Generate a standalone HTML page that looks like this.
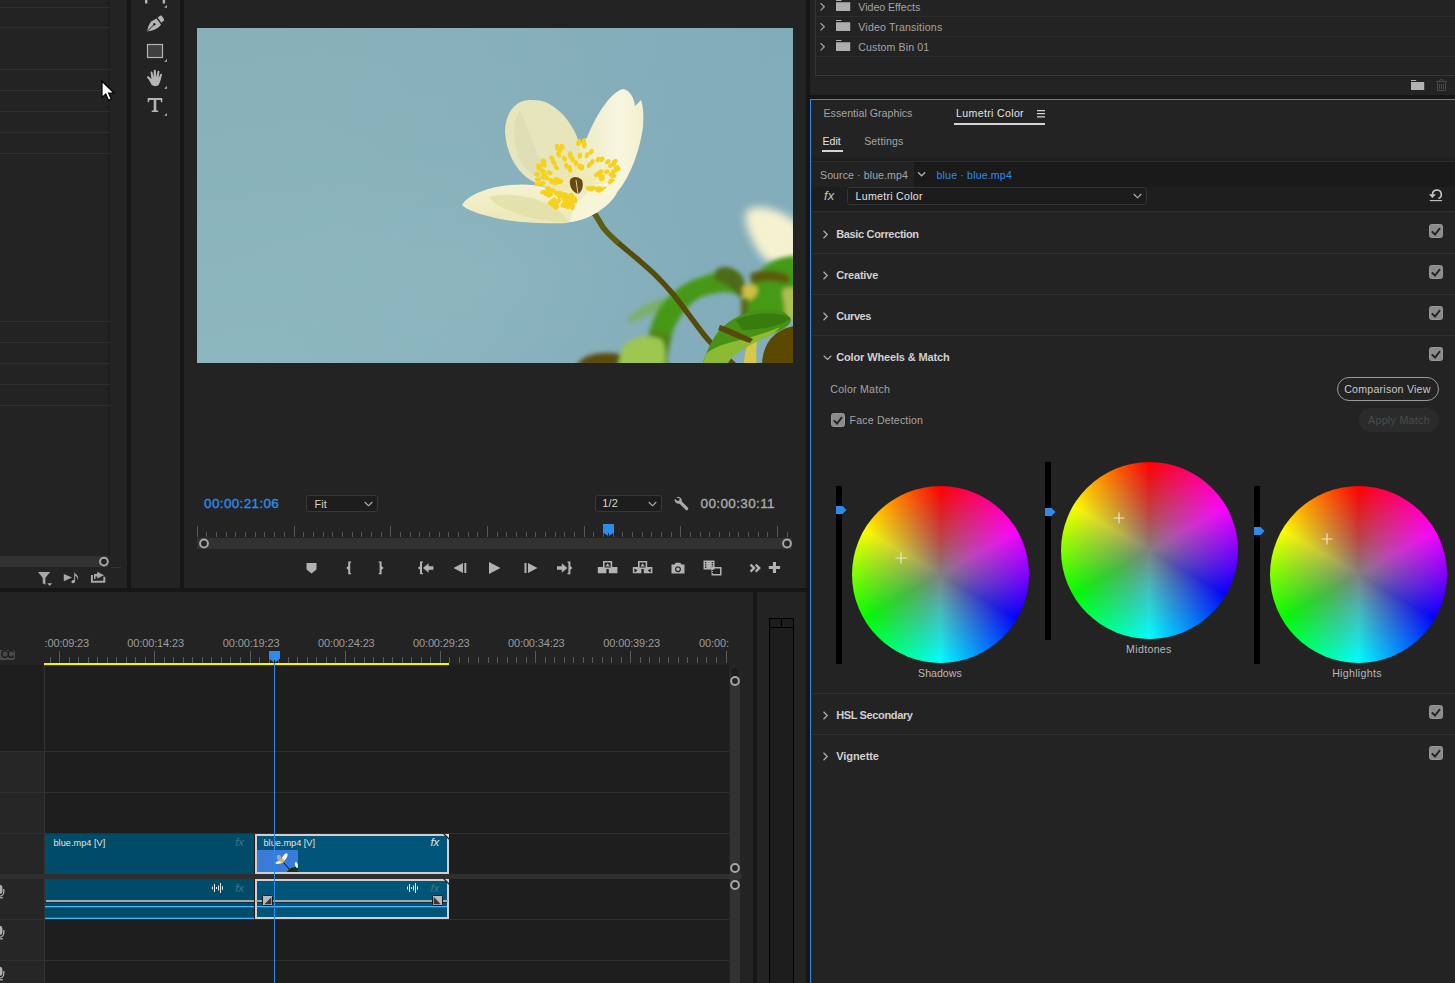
<!DOCTYPE html>
<html><head><meta charset="utf-8"><title>Premiere Pro - Lumetri Color</title>
<style>
html,body{margin:0;padding:0;background:#232323;}
body{width:1455px;height:983px;overflow:hidden;position:relative;font-family:"Liberation Sans",sans-serif;font-size:12px;color:#a7a7a7;}
.a{position:absolute;}
.t{position:absolute;white-space:nowrap;line-height:14px;}
.b{font-weight:bold;color:#d2d2d2;}
.dk{position:absolute;background:#161616;}
.ln{position:absolute;background:#2e2e2e;height:1px;}
svg{position:absolute;overflow:visible;}
.cb{position:absolute;width:14px;height:14px;background:#8b8b8b;border:1px solid #979797;box-sizing:border-box;border-radius:2.5px;}
.cb svg{left:-1px;top:-1px;}
</style></head><body>
<!-- LEFT PROJECT PANEL -->
<div class="a" style="left:0;top:0;width:110px;height:588px;background:#232323"></div>
<div class="a" style="left:108px;top:0;width:2px;height:555px;background:#1e1e1e"></div>
<div class="ln" style="left:0;top:7px;width:110px;background:#2e2e2e"></div>
<div class="ln" style="left:0;top:27px;width:110px;background:#2e2e2e"></div>
<div class="ln" style="left:0;top:69px;width:110px;background:#2e2e2e"></div>
<div class="ln" style="left:0;top:90px;width:110px;background:#2e2e2e"></div>
<div class="ln" style="left:0;top:111px;width:110px;background:#2e2e2e"></div>
<div class="ln" style="left:0;top:132px;width:110px;background:#2e2e2e"></div>
<div class="ln" style="left:0;top:153px;width:110px;background:#2e2e2e"></div>
<div class="ln" style="left:0;top:321px;width:110px;background:#2e2e2e"></div>
<div class="ln" style="left:0;top:342px;width:110px;background:#2e2e2e"></div>
<div class="ln" style="left:0;top:363px;width:110px;background:#2e2e2e"></div>
<div class="ln" style="left:0;top:384px;width:110px;background:#2e2e2e"></div>
<div class="ln" style="left:0;top:405px;width:110px;background:#2e2e2e"></div>

<div class="a" style="left:0;top:556px;width:108px;height:11px;background:#323232"></div>
<svg style="left:98px;top:556px" width="12" height="12"><circle cx="5.900" cy="5.600" r="3.900" fill="#232323" stroke="#a6a6a6" stroke-width="2"/></svg>
<div class="a" style="left:111px;top:567px;width:10px;height:1px;background:#333"></div>
<!-- bottom icons -->
<svg style="left:36px;top:570px" width="70" height="18" viewBox="36 570 70 18">
<g fill="#a8a8a8">
<path d="M38 572 H50.200 L45.400 577.800 V584.800 L42.700 583.200 V577.800 Z"/><path d="M47.200 583.200 h4.900 l-2.450 2.900z"/>
<path d="M63.800 574 L72 577.600 L63.800 581.200 Z"/>
<path d="M74.300 572.300 c.6 1.600 3.400 2.400 3.900 5.400 c.1 .9 -.1 1.700 -.5 2.300 c.1 -2.300 -1.300 -3.500 -2.600 -3.900 v5.400 a1.900 1.500 -20 1 1 -1 -1.300 z"/>
<path d="M97.200 571.800 L104 575.200 L97.200 578.600 V576.600 H95.500 V579 H94 V574 H97.200Z"/>
</g>
<path d="M91.900 575 v6.800 h12.400 v-5" fill="none" stroke="#a8a8a8" stroke-width="2"/>
</svg>
<!-- cursor -->
<svg style="left:101px;top:80px" width="14" height="22" viewBox="0 0 14 22"><path d="M1 1.200 V17.400 L4.800 14 L7.500 20.200 L10.200 19 L7.600 13 H13 Z" fill="#fff" stroke="#000" stroke-width="1.200" stroke-linejoin="miter"/></svg>
<!-- vertical dark bars -->
<div class="dk" style="left:127px;top:0;width:4px;height:588px"></div>
<div class="dk" style="left:180px;top:0;width:4px;height:588px"></div>
<!-- TOOLS -->
<svg style="left:140px;top:0" width="34" height="120" viewBox="0 0 34 120">
<g fill="#b4b4b4">
<path d="M5 0 h2.400 v3.600 h-2.400z M22.700 0 h2.400 v3.600 h-2.400z"/>
<path d="M27 5 v2.800 h-2.800z M27 59 v2.800 h-2.800z M27 86 v2.800 h-2.800z M27 113 v2.800 h-2.800z"/>
<!-- pen -->
<path d="M7.200 31.400 C7.700 27 9.300 23.500 11.600 21.300 L16.500 18.600 L21 24.400 C18.800 27.800 14.200 30.400 7.200 31.400Z"/>
<path d="M17.600 17.400 L20.300 15.700 C20.900 15.400 21.500 15.500 21.900 16 L24 19.300 C24.300 19.800 24.200 20.400 23.700 20.800 L21.400 22.700Z"/>
</g>
<path d="M7.600 31 L13.800 24.800" stroke="#232323" stroke-width="1" fill="none"/><circle cx="14.300" cy="24.300" r="1.200" fill="#232323"/>
<!-- rect -->
<rect x="7.500" y="44.500" width="15" height="13" fill="#404040" stroke="#b4b4b4" stroke-width="1.200"/>
<!-- hand -->
<g fill="#b4b4b4" transform="translate(1.600,-0.900)"><path d="M10.200 86 c-1.300 -2 -2.800 -5.500 -4.600 -7.300 c-.8 -1.200 .5 -2.200 1.700 -1.300 l2.600 2.600 l-.9 -6.300 c-.2 -1.400 1.600 -1.700 1.900 -.3 l1.100 4.800 l.2 -6.600 c0 -1.400 1.900 -1.400 2 0 l.4 6.500 l1.300 -5.600 c.3 -1.300 2.100 -.9 1.900 .4 l-.8 5.900 l1.600 -3.600 c.6 -1.200 2.200 -.5 1.800 .8 c-.9 3 -1.400 6.500 -3.400 10 c-1.500 1.400 -5 1.400 -6.800 0z"/></g>
<!-- T -->
<path d="M7.700 98 h14.600 v4.300 h-1.200 l-.6 -2.300 h-4.200 v10.200 l2 .5 v1.400 h-6.600 v-1.400 l2 -.5 v-10.200 h-4.200 l-.6 2.300 h-1.200z" fill="#b4b4b4"/>
</svg>
<!-- PROGRAM MONITOR IMAGE -->
<svg style="left:197px;top:28px" width="596" height="335" viewBox="197 28 596 335">
<defs>
<linearGradient id="sky" x1="0" y1="0" x2="0.25" y2="1"><stop offset="0" stop-color="#87b0b9"/><stop offset="1" stop-color="#8db7bf"/></linearGradient>
<linearGradient id="sky2" x1="0" y1="0" x2="1" y2="0.15"><stop offset="0.200" stop-color="#81abba" stop-opacity="0.000"/><stop offset="0.267" stop-color="#81abba" stop-opacity="0.017"/><stop offset="0.333" stop-color="#81abba" stop-opacity="0.063"/><stop offset="0.400" stop-color="#81abba" stop-opacity="0.133"/><stop offset="0.467" stop-color="#81abba" stop-opacity="0.220"/><stop offset="0.533" stop-color="#81abba" stop-opacity="0.320"/><stop offset="0.600" stop-color="#81abba" stop-opacity="0.425"/><stop offset="0.667" stop-color="#81abba" stop-opacity="0.530"/><stop offset="0.733" stop-color="#81abba" stop-opacity="0.630"/><stop offset="0.800" stop-color="#81abba" stop-opacity="0.717"/><stop offset="0.867" stop-color="#81abba" stop-opacity="0.787"/><stop offset="0.933" stop-color="#81abba" stop-opacity="0.833"/><stop offset="1.000" stop-color="#81abba" stop-opacity="0.850"/></linearGradient>
<radialGradient id="sky3" cx="0.45" cy="0.75" r="0.4"><stop offset="0" stop-color="#92b9c1" stop-opacity="0.4"/><stop offset="1" stop-color="#8fb9c1" stop-opacity="0"/></radialGradient>
<filter id="b2" x="-20%" y="-20%" width="140%" height="140%"><feGaussianBlur stdDeviation="2.1"/></filter>
<filter id="b3" x="-20%" y="-20%" width="140%" height="140%"><feGaussianBlur stdDeviation="2.600"/></filter>
<filter id="b4" x="-30%" y="-30%" width="160%" height="160%"><feGaussianBlur stdDeviation="4.500"/></filter>
<filter id="b1" x="-10%" y="-10%" width="120%" height="120%"><feGaussianBlur stdDeviation="0.700"/></filter>
<filter id="b05"><feGaussianBlur stdDeviation="0.450"/></filter>
<clipPath id="imgc"><rect x="197" y="28" width="596" height="335"/></clipPath>
<linearGradient id="pLL" x1="0" y1="0" x2="0" y2="1"><stop offset="0" stop-color="#f5f2d2"/><stop offset="1" stop-color="#ece8b8"/></linearGradient>
<linearGradient id="pR" x1="0" y1="0" x2="1" y2="0"><stop offset="0" stop-color="#ecebc8"/><stop offset="0.6" stop-color="#f8f6de"/><stop offset="1" stop-color="#f3f0d0"/></linearGradient>
</defs>
<g clip-path="url(#imgc)">
<rect x="197" y="28" width="596" height="335" fill="url(#sky)"/>
<rect x="197" y="28" width="596" height="335" fill="url(#sky2)"/>
<rect x="197" y="28" width="596" height="335" fill="url(#sky3)"/>
<!-- blurred background flower -->
<g filter="url(#b4)"><path d="M747 210 C760 203 784 210 800 226 L800 268 C786 262 770 268 760 254 C752 240 742 222 747 210Z" fill="#f6f2d0"/></g>
<!-- feathery leaf far left (soft) -->
<g filter="url(#b3)" opacity=".8"><path d="M627 320 C640 306 654 300 668 298 L664 310 C652 312 640 318 630 324Z" fill="#7ab04a"/></g>
<!-- big arc leaf-stalk -->
<g filter="url(#b2)">
<path d="M644 366 C644 350 650 322 660 307 C672 290 690 280 702 277 C712 274 720 270 726 267 C734 268 740 274 742 282 C744 290 742 296 736 294 C730 291 714 292 701 297 C690 302 680 316 674 328 C670 340 667 354 667 366Z" fill="#469814"/>
<path d="M716 270 C724 264 736 268 742 276 C746 284 746 292 740 298 C734 288 724 282 714 280Z" fill="#4e6a12"/>
<path d="M576 366 C582 354 600 351 620 354 L624 366Z" fill="#5a4c0a"/>
<path d="M644 366 C644 352 648 338 652 330 L672 336 C669 346 667 356 667 366Z" fill="#527a12" opacity=".7"/>
<path d="M618 366 L622 348 C632 336 650 333 662 340 C666 348 666 358 664 366Z" fill="#9cc850"/>
<!-- right greens -->
<path d="M748 290 C756 268 774 256 796 256 L796 318 C780 316 762 316 750 318 C746 308 746 298 748 290Z" fill="#459a16"/>
<path d="M750 274 C762 268 780 270 790 276 L788 284 C776 280 762 280 752 284Z" fill="#5a5a10"/>
<path d="M742 288 C748 282 756 284 758 290 C756 298 750 302 744 300Z" fill="#cfc040"/>
<path d="M741 298 L748 298 L748 322 L741 322Z" fill="#566a14"/>
<path d="M782 290 C788 286 796 288 796 288 L796 318 L786 318Z" fill="#c8c860" opacity=".8"/>
</g>
<!-- stem -->
<path d="M591.5 211 C592.2 211.8 593.7 212.5 595.9 215.6 C598.1 218.7 601.1 225.1 604.6 229.4 C608.1 233.7 610.9 236.3 616.7 241.5 C622.5 246.7 632.6 254.7 639.2 260.5 C645.8 266.3 650.7 270.3 656.5 276.1 C662.3 281.9 668.0 288.2 673.8 295.1 C679.5 302.0 685.2 310.1 691 317.6 C696.8 325.1 701.7 332.6 708.3 340 C714.9 347.4 726.2 357.2 730.8 361.7 C735.4 366.2 735.1 366.1 736 367" fill="none" stroke="#544c08" stroke-width="5.400" stroke-linecap="round" filter="url(#b1)"/>
<path d="M591.5 211 C592.2 211.8 593.7 212.5 595.9 215.6 C598.1 218.7 601.1 225.1 604.6 229.4 C608.1 233.7 614.7 239.5 616.7 241.5" fill="none" stroke="#5e6412" stroke-width="5.400" stroke-linecap="round" filter="url(#b1)" opacity=".8"/>
<!-- foreground leaf -->
<g filter="url(#b1)">
<path d="M744 366 C744 356 746 346 750 340 L757 342 C756 350 756 358 757 366Z" fill="#d6c84c"/>
<path d="M762 366 C762 346 772 330 794 326 L796 366Z" fill="#5c4a06"/>
<path d="M702 366 C706 352 712 340 718 332 C730 318 748 310 768 309 C778 309 788 312 791 320 C790 326 782 330 772 334 C756 340 742 348 730 358 L724 366Z" fill="#479212"/>
<path d="M702 366 L706 354 C714 347 726 343 740 340 C752 337 766 333 780 327 C776 333 768 337 758 341 C746 347 736 353 730 360 L726 366Z" fill="#8cba30"/>
<path d="M720 325 C730 328 742 334 753 339 L750 343 C740 340 728 334 718 330Z" fill="#5a4a08"/>
<path d="M736 320 C754 312 776 311 791 318 C782 326 760 330 742 330Z" fill="#35780f" opacity=".85"/>
</g>
<!-- petals -->
<g filter="url(#b05)">
<path d="M556 188 C562 170 574 150 586 138 L600 150 L604 196 L590 216 L572 222 L552 204Z" fill="#eeebc6"/>
<path d="M529 100 C515 100 505 114 505 132 C506 152 516 172 532 181 C542 186 552 190 562 190 C576 180 582 160 579 143 C574 125 560 108 545 102 C539 100 534 100 529 100Z" fill="#e6e5bc"/>
<path d="M520 110 C512 122 512 146 522 164 C530 174 540 180 550 182 C540 160 530 134 520 110Z" fill="#dcdcb2" opacity=".7"/>
<path d="M623 89 C612 92 598 110 586 140 L581 162 L598 196 L617 192 C630 178 640 150 643 127 C644 115 643 105 641 100 L635 106 C634 98 630 90 623 89Z" fill="url(#pR)"/>
<path d="M462 205 C468 195 488 187 510 185 C530 183 546 186 560 192 L578 214 C574 220 570 223 566 223 C548 224 520 223 500 219 C482 215 466 210 462 205Z" fill="url(#pLL)"/>
<path d="M489 197 C506 192 530 196 548 204 C558 210 566 216 568 222 C548 222 524 218 508 210 C498 206 492 202 489 197Z" fill="#e2dea4" opacity=".75"/>
<path d="M570 222 C572 210 578 200 588 192 C598 184 610 178 621 174 C622 182 618 194 610 202 C600 212 586 220 570 222Z" fill="#f7f5d8"/>
</g>
<!-- stamens -->
<g stroke="#f1eaa8" stroke-width="0.700" opacity=".85" fill="none">
<path d="M576 185 L554.9 182.9"/>
<path d="M576 185 L579.7 166.3"/>
<path d="M576 185 L564.5 158.8"/>
<path d="M576 185 L569.6 202.9"/>
<path d="M576 185 L572.0 201.5"/>
<path d="M576 185 L571.4 195.7"/>
<path d="M576 185 L543.3 163.2"/>
<path d="M576 185 L565.3 198.1"/>
<path d="M576 185 L579.1 142.2"/>
<path d="M576 185 L570.3 155.9"/>
<path d="M576 185 L588.8 188.3"/>
<path d="M576 185 L601.5 176.6"/>
<path d="M576 185 L565.3 195.5"/>
<path d="M576 185 L537.5 184.1"/>
<path d="M576 185 L553.5 200.3"/>
<path d="M576 185 L579.9 155.7"/>
<path d="M576 185 L569.8 168.1"/>
<path d="M576 185 L571.2 198.1"/>
<path d="M576 185 L587.0 155.1"/>
<path d="M576 185 L542.5 183.3"/>
<path d="M576 185 L556.3 167.3"/>
<path d="M576 185 L607.7 161.8"/>
<path d="M576 185 L546.9 193.6"/>
<path d="M576 185 L557.7 148.9"/>
<path d="M576 185 L592.1 161.9"/>
<path d="M576 185 L590.8 189.1"/>
<path d="M576 185 L543.9 165.0"/>
<path d="M576 185 L558.3 201.2"/>
<path d="M576 185 L571.1 204.6"/>
<path d="M576 185 L601.8 159.4"/>
<path d="M576 185 L601.9 178.8"/>
<path d="M576 185 L591.3 151.8"/>
<path d="M576 185 L570.4 154.2"/>
<path d="M576 185 L616.7 167.5"/>
<path d="M576 185 L552.0 158.3"/>
<path d="M576 185 L568.3 205.5"/>
<path d="M576 185 L583.8 141.4"/>
<path d="M576 185 L600.5 171.8"/>
<path d="M576 185 L542.9 171.1"/>
<path d="M576 185 L573.4 201.4"/>
<path d="M576 185 L563.5 194.7"/>
<path d="M576 185 L568.2 206.3"/>
<path d="M576 185 L564.4 198.4"/>
<path d="M576 185 L539.4 168.5"/>
<path d="M576 185 L567.4 202.3"/>
<path d="M576 185 L562.3 146.6"/>
<path d="M576 185 L613.5 164.1"/>
<path d="M576 185 L548.0 188.4"/>
<path d="M576 185 L537.2 174.4"/>
<path d="M576 185 L593.1 187.8"/>
<path d="M576 185 L560.2 196.2"/>
<path d="M576 185 L549.7 194.3"/>
<path d="M576 185 L572.6 159.5"/>
<path d="M576 185 L575.1 200.1"/>
<path d="M576 185 L544.2 174.6"/>
<path d="M576 185 L605.5 189.1"/>
<path d="M576 185 L558.7 154.7"/>
<path d="M576 185 L582.0 167.6"/>
<path d="M576 185 L611.7 180.8"/>
<path d="M576 185 L613.3 175.9"/>
<path d="M576 185 L549.4 172.8"/>
<path d="M576 185 L563.0 204.7"/>
<path d="M576 185 L559.4 193.2"/>
<path d="M576 185 L559.0 182.0"/>
<path d="M576 185 L565.8 200.9"/>
<path d="M576 185 L572.3 206.4"/>
<path d="M576 185 L576.0 163.1"/>
<path d="M576 185 L551.4 191.2"/>
<path d="M576 185 L556.6 179.1"/>
<path d="M576 185 L617.6 169.2"/>
<path d="M576 185 L553.9 162.4"/>
<path d="M576 185 L570.1 196.0"/>
<path d="M576 185 L551.3 180.3"/>
<path d="M576 185 L596.9 174.6"/>
<path d="M576 185 L572.4 207.1"/>
<path d="M576 185 L566.6 165.7"/>
<path d="M576 185 L570.0 169.8"/>
<path d="M576 185 L557.4 146.8"/>
<path d="M576 185 L611.5 174.3"/>
<path d="M576 185 L550.3 190.3"/>
<path d="M576 185 L552.5 203.4"/>
<path d="M576 185 L559.9 150.0"/>
<path d="M576 185 L552.4 182.0"/>
<path d="M576 185 L614.8 161.4"/>
<path d="M576 185 L614.0 171.3"/>
<path d="M576 185 L611.0 165.3"/>
<path d="M576 185 L549.6 195.2"/>
<path d="M576 185 L560.3 181.0"/>
<path d="M576 185 L573.4 198.8"/>
<path d="M576 185 L543.2 192.1"/>
<path d="M576 185 L600.5 188.9"/>
<path d="M576 185 L612.2 187.2"/>
<path d="M576 185 L598.8 188.4"/>
<path d="M576 185 L556.8 193.1"/>
<path d="M576 185 L559.2 194.6"/>
<path d="M576 185 L578.3 143.1"/>
<path d="M576 185 L606.7 171.8"/>
<path d="M576 185 L584.4 145.5"/>
<path d="M576 185 L565.4 205.2"/>
<path d="M576 185 L611.0 182.6"/>
<path d="M576 185 L598.2 159.4"/>
<path d="M576 185 L550.7 202.6"/>
<path d="M576 185 L538.0 179.6"/>
<path d="M576 185 L598.2 190.2"/>
<path d="M576 185 L539.0 166.0"/>
<path d="M576 185 L589.2 165.0"/>
<path d="M576 185 L566.1 196.7"/>
<path d="M576 185 L611.8 181.7"/>
<path d="M576 185 L555.0 205.4"/>
<path d="M576 185 L602.2 192.3"/>
<path d="M576 185 L543.9 177.6"/>
<path d="M576 185 L603.0 191.2"/>
<path d="M576 185 L557.5 147.7"/>
<path d="M576 185 L543.6 161.1"/>
<path d="M576 185 L598.5 173.5"/>
<path d="M576 185 L552.8 190.9"/>
<path d="M576 185 L547.0 194.1"/>
<path d="M576 185 L549.1 190.8"/>
<path d="M576 185 L556.5 207.1"/>
<path d="M576 185 L546.2 177.6"/>
</g>
<g fill="#f6d21c" filter="url(#b05)">
<ellipse cx="554.9" cy="182.9" rx="3.1" ry="2.2" transform="rotate(186 554.9 182.9)"/>
<ellipse cx="579.7" cy="166.3" rx="3.1" ry="2.2" transform="rotate(281 579.7 166.3)"/>
<ellipse cx="564.5" cy="158.8" rx="3.1" ry="2.2" transform="rotate(247 564.5 158.8)"/>
<ellipse cx="569.6" cy="202.9" rx="3.1" ry="2.2" transform="rotate(109 569.6 202.9)"/>
<ellipse cx="572.0" cy="201.5" rx="3.1" ry="2.2" transform="rotate(103 572.0 201.5)"/>
<ellipse cx="571.4" cy="195.7" rx="3.1" ry="2.2" transform="rotate(112 571.4 195.7)"/>
<ellipse cx="543.3" cy="163.2" rx="3.1" ry="2.2" transform="rotate(215 543.3 163.2)"/>
<ellipse cx="565.3" cy="198.1" rx="3.1" ry="2.2" transform="rotate(128 565.3 198.1)"/>
<ellipse cx="579.1" cy="142.2" rx="3.1" ry="2.2" transform="rotate(274 579.1 142.2)"/>
<ellipse cx="570.3" cy="155.9" rx="3.1" ry="2.2" transform="rotate(259 570.3 155.9)"/>
<ellipse cx="588.8" cy="188.3" rx="3.1" ry="2.2" transform="rotate(375 588.8 188.3)"/>
<ellipse cx="601.5" cy="176.6" rx="3.1" ry="2.2" transform="rotate(341 601.5 176.6)"/>
<ellipse cx="565.3" cy="195.5" rx="3.1" ry="2.2" transform="rotate(134 565.3 195.5)"/>
<ellipse cx="537.5" cy="184.1" rx="3.1" ry="2.2" transform="rotate(181 537.5 184.1)"/>
<ellipse cx="553.5" cy="200.3" rx="3.1" ry="2.2" transform="rotate(144 553.5 200.3)"/>
<ellipse cx="579.9" cy="155.7" rx="3.1" ry="2.2" transform="rotate(277 579.9 155.7)"/>
<ellipse cx="569.8" cy="168.1" rx="3.1" ry="2.2" transform="rotate(251 569.8 168.1)"/>
<ellipse cx="571.2" cy="198.1" rx="3.1" ry="2.2" transform="rotate(109 571.2 198.1)"/>
<ellipse cx="587.0" cy="155.1" rx="3.1" ry="2.2" transform="rotate(289 587.0 155.1)"/>
<ellipse cx="542.5" cy="183.3" rx="3.1" ry="2.2" transform="rotate(183 542.5 183.3)"/>
<ellipse cx="556.3" cy="167.3" rx="3.1" ry="2.2" transform="rotate(223 556.3 167.3)"/>
<ellipse cx="607.7" cy="161.8" rx="3.1" ry="2.2" transform="rotate(322 607.7 161.8)"/>
<ellipse cx="546.9" cy="193.6" rx="3.1" ry="2.2" transform="rotate(163 546.9 193.6)"/>
<ellipse cx="557.7" cy="148.9" rx="3.1" ry="2.2" transform="rotate(244 557.7 148.9)"/>
<ellipse cx="592.1" cy="161.9" rx="3.1" ry="2.2" transform="rotate(304 592.1 161.9)"/>
<ellipse cx="590.8" cy="189.1" rx="3.1" ry="2.2" transform="rotate(376 590.8 189.1)"/>
<ellipse cx="543.9" cy="165.0" rx="3.1" ry="2.2" transform="rotate(213 543.9 165.0)"/>
<ellipse cx="558.3" cy="201.2" rx="3.1" ry="2.2" transform="rotate(136 558.3 201.2)"/>
<ellipse cx="571.1" cy="204.6" rx="3.1" ry="2.2" transform="rotate(103 571.1 204.6)"/>
<ellipse cx="601.8" cy="159.4" rx="3.1" ry="2.2" transform="rotate(314 601.8 159.4)"/>
<ellipse cx="601.9" cy="178.8" rx="3.1" ry="2.2" transform="rotate(346 601.9 178.8)"/>
<ellipse cx="591.3" cy="151.8" rx="3.1" ry="2.2" transform="rotate(294 591.3 151.8)"/>
<ellipse cx="570.4" cy="154.2" rx="3.1" ry="2.2" transform="rotate(260 570.4 154.2)"/>
<ellipse cx="616.7" cy="167.5" rx="3.1" ry="2.2" transform="rotate(336 616.7 167.5)"/>
<ellipse cx="552.0" cy="158.3" rx="3.1" ry="2.2" transform="rotate(229 552.0 158.3)"/>
<ellipse cx="568.3" cy="205.5" rx="3.1" ry="2.2" transform="rotate(110 568.3 205.5)"/>
<ellipse cx="583.8" cy="141.4" rx="3.1" ry="2.2" transform="rotate(280 583.8 141.4)"/>
<ellipse cx="600.5" cy="171.8" rx="3.1" ry="2.2" transform="rotate(330 600.5 171.8)"/>
<ellipse cx="542.9" cy="171.1" rx="3.1" ry="2.2" transform="rotate(204 542.9 171.1)"/>
<ellipse cx="573.4" cy="201.4" rx="3.1" ry="2.2" transform="rotate(99 573.4 201.4)"/>
<ellipse cx="563.5" cy="194.7" rx="3.1" ry="2.2" transform="rotate(141 563.5 194.7)"/>
<ellipse cx="568.2" cy="206.3" rx="3.1" ry="2.2" transform="rotate(109 568.2 206.3)"/>
<ellipse cx="564.4" cy="198.4" rx="3.1" ry="2.2" transform="rotate(130 564.4 198.4)"/>
<ellipse cx="539.4" cy="168.5" rx="3.1" ry="2.2" transform="rotate(205 539.4 168.5)"/>
<ellipse cx="567.4" cy="202.3" rx="3.1" ry="2.2" transform="rotate(115 567.4 202.3)"/>
<ellipse cx="562.3" cy="146.6" rx="3.1" ry="2.2" transform="rotate(251 562.3 146.6)"/>
<ellipse cx="613.5" cy="164.1" rx="3.1" ry="2.2" transform="rotate(330 613.5 164.1)"/>
<ellipse cx="548.0" cy="188.4" rx="3.1" ry="2.2" transform="rotate(173 548.0 188.4)"/>
<ellipse cx="537.2" cy="174.4" rx="3.1" ry="2.2" transform="rotate(196 537.2 174.4)"/>
<ellipse cx="593.1" cy="187.8" rx="3.1" ry="2.2" transform="rotate(370 593.1 187.8)"/>
<ellipse cx="560.2" cy="196.2" rx="3.1" ry="2.2" transform="rotate(143 560.2 196.2)"/>
<ellipse cx="549.7" cy="194.3" rx="3.1" ry="2.2" transform="rotate(160 549.7 194.3)"/>
<ellipse cx="572.6" cy="159.5" rx="3.1" ry="2.2" transform="rotate(263 572.6 159.5)"/>
<ellipse cx="575.1" cy="200.1" rx="3.1" ry="2.2" transform="rotate(93 575.1 200.1)"/>
<ellipse cx="544.2" cy="174.6" rx="3.1" ry="2.2" transform="rotate(199 544.2 174.6)"/>
<ellipse cx="605.5" cy="189.1" rx="3.1" ry="2.2" transform="rotate(368 605.5 189.1)"/>
<ellipse cx="558.7" cy="154.7" rx="3.1" ry="2.2" transform="rotate(241 558.7 154.7)"/>
<ellipse cx="582.0" cy="167.6" rx="3.1" ry="2.2" transform="rotate(288 582.0 167.6)"/>
<ellipse cx="611.7" cy="180.8" rx="3.1" ry="2.2" transform="rotate(353 611.7 180.8)"/>
<ellipse cx="613.3" cy="175.9" rx="3.1" ry="2.2" transform="rotate(346 613.3 175.9)"/>
<ellipse cx="549.4" cy="172.8" rx="3.1" ry="2.2" transform="rotate(206 549.4 172.8)"/>
<ellipse cx="563.0" cy="204.7" rx="3.1" ry="2.2" transform="rotate(122 563.0 204.7)"/>
<ellipse cx="559.4" cy="193.2" rx="3.1" ry="2.2" transform="rotate(153 559.4 193.2)"/>
<ellipse cx="559.0" cy="182.0" rx="3.1" ry="2.2" transform="rotate(191 559.0 182.0)"/>
<ellipse cx="565.8" cy="200.9" rx="3.1" ry="2.2" transform="rotate(121 565.8 200.9)"/>
<ellipse cx="572.3" cy="206.4" rx="3.1" ry="2.2" transform="rotate(99 572.3 206.4)"/>
<ellipse cx="576.0" cy="163.1" rx="3.1" ry="2.2" transform="rotate(270 576.0 163.1)"/>
<ellipse cx="551.4" cy="191.2" rx="3.1" ry="2.2" transform="rotate(165 551.4 191.2)"/>
<ellipse cx="556.6" cy="179.1" rx="3.1" ry="2.2" transform="rotate(198 556.6 179.1)"/>
<ellipse cx="617.6" cy="169.2" rx="3.1" ry="2.2" transform="rotate(338 617.6 169.2)"/>
<ellipse cx="553.9" cy="162.4" rx="3.1" ry="2.2" transform="rotate(227 553.9 162.4)"/>
<ellipse cx="570.1" cy="196.0" rx="3.1" ry="2.2" transform="rotate(117 570.1 196.0)"/>
<ellipse cx="551.3" cy="180.3" rx="3.1" ry="2.2" transform="rotate(191 551.3 180.3)"/>
<ellipse cx="596.9" cy="174.6" rx="3.1" ry="2.2" transform="rotate(332 596.9 174.6)"/>
<ellipse cx="572.4" cy="207.1" rx="3.1" ry="2.2" transform="rotate(99 572.4 207.1)"/>
<ellipse cx="566.6" cy="165.7" rx="3.1" ry="2.2" transform="rotate(245 566.6 165.7)"/>
<ellipse cx="570.0" cy="169.8" rx="3.1" ry="2.2" transform="rotate(250 570.0 169.8)"/>
<ellipse cx="557.4" cy="146.8" rx="3.1" ry="2.2" transform="rotate(245 557.4 146.8)"/>
<ellipse cx="611.5" cy="174.3" rx="3.1" ry="2.2" transform="rotate(342 611.5 174.3)"/>
<ellipse cx="550.3" cy="190.3" rx="3.1" ry="2.2" transform="rotate(168 550.3 190.3)"/>
<ellipse cx="552.5" cy="203.4" rx="3.1" ry="2.2" transform="rotate(140 552.5 203.4)"/>
<ellipse cx="559.9" cy="150.0" rx="3.1" ry="2.2" transform="rotate(246 559.9 150.0)"/>
<ellipse cx="552.4" cy="182.0" rx="3.1" ry="2.2" transform="rotate(188 552.4 182.0)"/>
<ellipse cx="614.8" cy="161.4" rx="3.1" ry="2.2" transform="rotate(327 614.8 161.4)"/>
<ellipse cx="614.0" cy="171.3" rx="3.1" ry="2.2" transform="rotate(339 614.0 171.3)"/>
<ellipse cx="611.0" cy="165.3" rx="3.1" ry="2.2" transform="rotate(329 611.0 165.3)"/>
<ellipse cx="549.6" cy="195.2" rx="3.1" ry="2.2" transform="rotate(158 549.6 195.2)"/>
<ellipse cx="560.3" cy="181.0" rx="3.1" ry="2.2" transform="rotate(195 560.3 181.0)"/>
<ellipse cx="573.4" cy="198.8" rx="3.1" ry="2.2" transform="rotate(100 573.4 198.8)"/>
<ellipse cx="543.2" cy="192.1" rx="3.1" ry="2.2" transform="rotate(167 543.2 192.1)"/>
<ellipse cx="600.5" cy="188.9" rx="3.1" ry="2.2" transform="rotate(369 600.5 188.9)"/>
<ellipse cx="612.2" cy="187.2" rx="3.1" ry="2.2" transform="rotate(364 612.2 187.2)"/>
<ellipse cx="598.8" cy="188.4" rx="3.1" ry="2.2" transform="rotate(369 598.8 188.4)"/>
<ellipse cx="556.8" cy="193.1" rx="3.1" ry="2.2" transform="rotate(156 556.8 193.1)"/>
<ellipse cx="559.2" cy="194.6" rx="3.1" ry="2.2" transform="rotate(149 559.2 194.6)"/>
<ellipse cx="578.3" cy="143.1" rx="3.1" ry="2.2" transform="rotate(273 578.3 143.1)"/>
<ellipse cx="606.7" cy="171.8" rx="3.1" ry="2.2" transform="rotate(336 606.7 171.8)"/>
<ellipse cx="584.4" cy="145.5" rx="3.1" ry="2.2" transform="rotate(281 584.4 145.5)"/>
<ellipse cx="565.4" cy="205.2" rx="3.1" ry="2.2" transform="rotate(117 565.4 205.2)"/>
<ellipse cx="611.0" cy="182.6" rx="3.1" ry="2.2" transform="rotate(356 611.0 182.6)"/>
<ellipse cx="598.2" cy="159.4" rx="3.1" ry="2.2" transform="rotate(310 598.2 159.4)"/>
<ellipse cx="550.7" cy="202.6" rx="3.1" ry="2.2" transform="rotate(144 550.7 202.6)"/>
<ellipse cx="538.0" cy="179.6" rx="3.1" ry="2.2" transform="rotate(188 538.0 179.6)"/>
<ellipse cx="598.2" cy="190.2" rx="3.1" ry="2.2" transform="rotate(374 598.2 190.2)"/>
<ellipse cx="539.0" cy="166.0" rx="3.1" ry="2.2" transform="rotate(208 539.0 166.0)"/>
<ellipse cx="589.2" cy="165.0" rx="3.1" ry="2.2" transform="rotate(302 589.2 165.0)"/>
<ellipse cx="566.1" cy="196.7" rx="3.1" ry="2.2" transform="rotate(129 566.1 196.7)"/>
<ellipse cx="611.8" cy="181.7" rx="3.1" ry="2.2" transform="rotate(354 611.8 181.7)"/>
<ellipse cx="555.0" cy="205.4" rx="3.1" ry="2.2" transform="rotate(134 555.0 205.4)"/>
<ellipse cx="602.2" cy="192.3" rx="3.1" ry="2.2" transform="rotate(376 602.2 192.3)"/>
<ellipse cx="543.9" cy="177.6" rx="3.1" ry="2.2" transform="rotate(194 543.9 177.6)"/>
<ellipse cx="603.0" cy="191.2" rx="3.1" ry="2.2" transform="rotate(374 603.0 191.2)"/>
<ellipse cx="557.5" cy="147.7" rx="3.1" ry="2.2" transform="rotate(245 557.5 147.7)"/>
<ellipse cx="543.6" cy="161.1" rx="3.1" ry="2.2" transform="rotate(218 543.6 161.1)"/>
<ellipse cx="598.5" cy="173.5" rx="3.1" ry="2.2" transform="rotate(332 598.5 173.5)"/>
<ellipse cx="552.8" cy="190.9" rx="3.1" ry="2.2" transform="rotate(165 552.8 190.9)"/>
<ellipse cx="547.0" cy="194.1" rx="3.1" ry="2.2" transform="rotate(162 547.0 194.1)"/>
<ellipse cx="549.1" cy="190.8" rx="3.1" ry="2.2" transform="rotate(167 549.1 190.8)"/>
<ellipse cx="556.5" cy="207.1" rx="3.1" ry="2.2" transform="rotate(130 556.5 207.1)"/>
<ellipse cx="546.2" cy="177.6" rx="3.1" ry="2.2" transform="rotate(195 546.2 177.6)"/>
</g>
<path d="M570 180 C572 176 578 176 582 180 C584 186 582 192 578 194 C572 192 569 186 570 180Z" fill="#684a12" filter="url(#b05)"/>
<path d="M576 180 L578 194" stroke="#d8d090" stroke-width="1"/>
<!-- front petal over stamens -->
<path d="M570 222 C574 212 582 204 592 198 C602 192 612 184 621 174 C622 182 618 194 610 202 C600 212 586 220 570 222Z" fill="#f7f5d8" filter="url(#b05)"/>
</g>
</svg>
<!-- MONITOR CONTROLS -->
<div class="t" style="left:204.10px;top:496.92px;font-size:13.5px;letter-spacing:0.345px;color:#2d8ceb;-webkit-text-stroke:0.35px #2d8ceb;">00:00:21:06</div>
<div class="a" style="left:306px;top:495px;width:70px;height:15px;border:1px solid #373737;border-radius:3px;background:#1d1d1d"></div>
<div class="t" style="left:314.60px;top:497.26px;font-size:10.8px;letter-spacing:0.101px;color:#d4d4d4;">Fit</div>
<svg style="left:364px;top:501px" width="10" height="7"><path d="M0.700 1 L4.500 4.800 L8.300 1" fill="none" stroke="#b4b4b4" stroke-width="1.100"/></svg>
<div class="a" style="left:595px;top:495px;width:65px;height:15px;border:1px solid #373737;border-radius:3px;background:#1d1d1d"></div>
<div class="t" style="left:602.30px;top:496.39px;font-size:11.0px;letter-spacing:0.170px;color:#d4d4d4;">1/2</div>
<svg style="left:648px;top:501px" width="10" height="7"><path d="M0.700 1 L4.500 4.800 L8.300 1" fill="none" stroke="#b4b4b4" stroke-width="1.100"/></svg>
<!-- wrench -->
<svg style="left:673px;top:495px" width="17" height="17" viewBox="0 0 17 17"><path d="M3.200 2.200 a4 4 0 0 1 5.600 4.300 l6 6 a1.500 1.500 0 0 1 -2.200 2.200 l-6 -6 a4 4 0 0 1 -4.800 -5 l2.500 2.400 l2 -.6 l.5 -2 z" fill="#ababab"/></svg>
<div class="t" style="left:700.60px;top:496.92px;font-size:13.5px;letter-spacing:0.372px;color:#ababab;-webkit-text-stroke:0.35px #ababab;">00:00:30:11</div>
<!-- mini ruler -->
<svg style="left:0;top:0" width="1455" height="600">
<g stroke="#565656" stroke-width="1">
<path d="M197.5 526 V537"/><path d="M206.5 532 V537"/><path d="M216.5 532 V537"/><path d="M226.5 532 V537"/><path d="M235.5 532 V537"/><path d="M245.5 532 V537"/><path d="M255.5 532 V537"/><path d="M264.5 532 V537"/><path d="M274.5 532 V537"/><path d="M284.5 532 V537"/><path d="M294.5 526 V537"/><path d="M303.5 532 V537"/><path d="M313.5 532 V537"/><path d="M323.5 532 V537"/><path d="M332.5 532 V537"/><path d="M342.5 532 V537"/><path d="M352.5 532 V537"/><path d="M361.5 532 V537"/><path d="M371.5 532 V537"/><path d="M381.5 532 V537"/><path d="M390.5 526 V537"/><path d="M400.5 532 V537"/><path d="M410.5 532 V537"/><path d="M419.5 532 V537"/><path d="M429.5 532 V537"/><path d="M439.5 532 V537"/><path d="M448.5 532 V537"/><path d="M458.5 532 V537"/><path d="M468.5 532 V537"/><path d="M477.5 532 V537"/><path d="M487.5 526 V537"/><path d="M497.5 532 V537"/><path d="M506.5 532 V537"/><path d="M516.5 532 V537"/><path d="M526.5 532 V537"/><path d="M535.5 532 V537"/><path d="M545.5 532 V537"/><path d="M555.5 532 V537"/><path d="M564.5 532 V537"/><path d="M574.5 532 V537"/><path d="M584.5 526 V537"/><path d="M593.5 532 V537"/><path d="M603.5 532 V537"/><path d="M613.5 532 V537"/><path d="M622.5 532 V537"/><path d="M632.5 532 V537"/><path d="M642.5 532 V537"/><path d="M651.5 532 V537"/><path d="M661.5 532 V537"/><path d="M671.5 532 V537"/><path d="M680.5 526 V537"/><path d="M690.5 532 V537"/><path d="M700.5 532 V537"/><path d="M709.5 532 V537"/><path d="M719.5 532 V537"/><path d="M729.5 532 V537"/><path d="M738.5 532 V537"/><path d="M748.5 532 V537"/><path d="M758.5 532 V537"/><path d="M767.5 532 V537"/><path d="M777.5 526 V537"/><path d="M787.5 532 V537"/>
</g>
</svg>
<div class="a" style="left:197px;top:538px;width:595px;height:11px;background:#323232"></div>
<svg style="left:198px;top:538px" width="12" height="12"><circle cx="6" cy="5.500" r="3.900" fill="#232323" stroke="#a6a6a6" stroke-width="2"/></svg>
<svg style="left:781px;top:538px" width="12" height="12"><circle cx="6" cy="5.500" r="3.900" fill="#232323" stroke="#a6a6a6" stroke-width="2"/></svg>
<!-- monitor playhead -->
<svg style="left:603px;top:524px" width="11" height="13"><path d="M0 0 H11 V8.500 L5.500 12.300 L0 8.500Z" fill="#2d8ceb"/><path d="M5.500 9 V12.300" stroke="#10283f" stroke-width="1"/></svg>
<!-- transport buttons -->
<svg style="left:300px;top:558px" width="490" height="20" viewBox="300 558 490 20">
<g fill="#b2b2b2" stroke="none">
<path d="M306.500 563 H316.500 V569.500 L311.500 573.500 L306.500 569.500Z"/>
<!-- play -->
<path d="M489 562 L500.500 568 L489 574Z"/>
<!-- step back -->
<path d="M453.500 568 L463 563 V573Z"/><rect x="464.300" y="563" width="2" height="10"/>
<!-- step fwd -->
<rect x="524.500" y="563" width="2" height="10"/><path d="M528 563 L537.500 568 L528 573Z"/>
<!-- plus -->
<path d="M772.900 562 h3.100 v4 h4.100 v3.100 h-4.100 v4 h-3.100 v-4 h-4.100 v-3.100 h4.100z"/>
<!-- go to in arrow -->
<path d="M423 568 l5.600 -4.800 v3 h4.800 v3.600 h-4.800 v3z"/>
<!-- go to out arrow -->
<path d="M567.400 568 l-5.600 -4.800 v3 h-4.800 v3.600 h4.800 v3z"/>
<!-- lift -->
<path d="M597.800 567 h5.200 v-6 h9.200 v6 h5.200 v6.200 h-8.600 v-4.200 h-2.400 v4.200 h-8.600z M604.600 562.500 v5 h6 v-5z" fill-rule="evenodd"/>
<path d="M607.600 563.300 l2.200 3.200 h-4.400z"/>
<!-- extract -->
<path d="M632.800 567 h5.200 v-6 h9.200 v6 h5.200 v6.200 h-8.600 v-4.200 h-2.400 v4.200 h-8.600z M639.600 562.500 v5 h6 v-5z" fill-rule="evenodd"/>
<path d="M642.600 563.300 l2.200 3.200 h-4.400z"/>
<!-- camera -->
<path d="M671.500 564.500 h3 l1.200 -1.800 h4.600 l1.200 1.800 h3 v9 h-13z M678 566.200 a3 3 0 1 0 .01 0z M678 567.400 a1.800 1.800 0 1 1 -.01 0z" fill-rule="evenodd"/>
<!-- comparison -->
<path d="M703.500 560.500 h11 v9 h-11z M705 562 v1.300 h1.300 v-1.300z M705 564.300 v1.300 h1.300 v-1.300z M705 566.600 v1.300 h1.300 v-1.300z M711.700 562 v1.300 h1.300 v-1.300z M711.700 564.300 v1.300 h1.300 v-1.300z M711.700 566.600 v1.300 h1.300 v-1.300z" fill-rule="evenodd"/>
<path d="M711.500 567 h10 v8.500 h-10z M713 568.500 v5.500 h7 v-5.500z M712 568 v1 h1 v-1z M712 570 v1 h1 v-1z M712 572 v1 h1 v-1z" fill-rule="evenodd"/>
</g>
<g fill="#232323"><path d="M637.600 570.600 l-3.200 -2 v4z M647.600 570.600 l3.200 -2 v4z"/></g>
<g fill="#b2b2b2"><path d="M348.2 561.5 h2.9 v1.300 h-0.900 V573 h0.900 v1.300 h-2.9 V569.6999999999999 l-2 -1.800 l2 -1.800z"/><path d="M381.6 561.5 h-2.9 v1.300 h0.900 V573 h-0.900 v1.300 h2.9 V569.6999999999999 l2 -1.800 l-2 -1.800z"/><path d="M420 561.5 h2.9 v1.300 h-0.900 V573 h0.900 v1.300 h-2.9 V569.6999999999999 l-2 -1.800 l2 -1.800z"/><path d="M570.4 561.5 h-2.9 v1.300 h0.900 V573 h-0.900 v1.300 h2.9 V569.6999999999999 l2 -1.800 l-2 -1.800z"/></g>
<g fill="none" stroke="#b2b2b2"><path d="M750.500 564.600 l3.600 3.500 l-3.600 3.500 M755.700 564.600 l3.600 3.500 l-3.600 3.500" stroke-width="2.300"/></g>
</svg>
<!-- horizontal dark bar under upper panels -->
<div class="dk" style="left:0;top:588px;width:806px;height:4px"></div>
<div class="dk" style="left:806px;top:0;width:4px;height:983px"></div>
<div class="dk" style="left:753px;top:592px;width:4px;height:391px"></div>
<!-- TIMELINE -->
<div class="a" style="left:0;top:665px;width:753px;height:318px;background:#1e1e1e"></div>
<div class="a" style="left:0;top:751px;width:44px;height:232px;background:#262626"></div>
<div class="a" style="left:44px;top:665px;width:1px;height:318px;background:#343434"></div>
<div class="a" style="left:729px;top:665px;width:24px;height:318px;background:#232323"></div>
<div class="t" style="left:44.60px;top:636.19px;font-size:11.0px;letter-spacing:-0.163px;color:#9c9c9c;">:00:09:23</div>
<div class="t" style="left:127.30px;top:636.19px;font-size:11.0px;letter-spacing:-0.137px;color:#9c9c9c;">00:00:14:23</div>
<div class="t" style="left:222.80px;top:636.19px;font-size:11.0px;letter-spacing:-0.137px;color:#9c9c9c;">00:00:19:23</div>
<div class="t" style="left:318.00px;top:636.19px;font-size:11.0px;letter-spacing:-0.137px;color:#9c9c9c;">00:00:24:23</div>
<div class="t" style="left:413.00px;top:636.19px;font-size:11.0px;letter-spacing:-0.137px;color:#9c9c9c;">00:00:29:23</div>
<div class="t" style="left:508.00px;top:636.19px;font-size:11.0px;letter-spacing:-0.137px;color:#9c9c9c;">00:00:34:23</div>
<div class="t" style="left:603.30px;top:636.19px;font-size:11.0px;letter-spacing:-0.137px;color:#9c9c9c;">00:00:39:23</div>
<div class="t" style="left:699.00px;top:636.19px;font-size:11.0px;letter-spacing:-0.097px;color:#9c9c9c;">00:00:</div>

<svg style="left:0;top:0" width="760" height="983">
<g stroke="#5a5a5a" stroke-width="1">
<path d="M50.5 657 V663"/><path d="M59.5 651 V663"/><path d="M69.5 657 V663"/><path d="M78.5 657 V663"/><path d="M88.5 657 V663"/><path d="M97.5 657 V663"/><path d="M107.5 657 V663"/><path d="M116.5 657 V663"/><path d="M126.5 657 V663"/><path d="M135.5 657 V663"/><path d="M145.5 657 V663"/><path d="M154.5 651 V663"/><path d="M164.5 657 V663"/><path d="M173.5 657 V663"/><path d="M183.5 657 V663"/><path d="M192.5 657 V663"/><path d="M202.5 657 V663"/><path d="M211.5 657 V663"/><path d="M221.5 657 V663"/><path d="M230.5 657 V663"/><path d="M240.5 657 V663"/><path d="M250.5 651 V663"/><path d="M259.5 657 V663"/><path d="M269.5 657 V663"/><path d="M278.5 657 V663"/><path d="M288.5 657 V663"/><path d="M297.5 657 V663"/><path d="M307.5 657 V663"/><path d="M316.5 657 V663"/><path d="M326.5 657 V663"/><path d="M335.5 657 V663"/><path d="M345.5 651 V663"/><path d="M354.5 657 V663"/><path d="M364.5 657 V663"/><path d="M373.5 657 V663"/><path d="M383.5 657 V663"/><path d="M392.5 657 V663"/><path d="M402.5 657 V663"/><path d="M411.5 657 V663"/><path d="M421.5 657 V663"/><path d="M430.5 657 V663"/><path d="M440.5 651 V663"/><path d="M449.5 657 V663"/><path d="M459.5 657 V663"/><path d="M468.5 657 V663"/><path d="M478.5 657 V663"/><path d="M488.5 657 V663"/><path d="M497.5 657 V663"/><path d="M507.5 657 V663"/><path d="M516.5 657 V663"/><path d="M526.5 657 V663"/><path d="M535.5 651 V663"/><path d="M545.5 657 V663"/><path d="M554.5 657 V663"/><path d="M564.5 657 V663"/><path d="M573.5 657 V663"/><path d="M583.5 657 V663"/><path d="M592.5 657 V663"/><path d="M602.5 657 V663"/><path d="M611.5 657 V663"/><path d="M621.5 657 V663"/><path d="M630.5 651 V663"/><path d="M640.5 657 V663"/><path d="M649.5 657 V663"/><path d="M659.5 657 V663"/><path d="M668.5 657 V663"/><path d="M678.5 657 V663"/><path d="M687.5 657 V663"/><path d="M697.5 657 V663"/><path d="M706.5 657 V663"/><path d="M716.5 657 V663"/><path d="M726.5 651 V663"/>
</g>
</svg>
<!-- CC badge -->
<div class="a" style="left:-3px;top:650px;width:18px;height:10px;background:#4a4a4a;border-radius:2px"></div>
<div class="t" style="left:0.70px;top:648.30px;font-size:10.4px;letter-spacing:-1.111px;color:#1a1a1a;font-weight:bold;">CC</div>
<div class="a" style="left:44px;top:663px;width:405px;height:2px;background:#f6f600"></div><div class="a" style="left:44px;top:665px;width:405px;height:1px;background:#3c3c14"></div>
<!-- track lines -->
<div class="ln" style="left:0;top:751px;width:729px;background:#303030"></div>
<div class="ln" style="left:0;top:792px;width:729px;background:#303030"></div>
<div class="ln" style="left:0;top:833px;width:729px;background:#303030"></div>
<div class="a" style="left:0;top:874px;width:742px;height:5px;background:#2f2f2f"></div>
<div class="ln" style="left:0;top:919px;width:729px;background:#303030"></div>
<div class="ln" style="left:0;top:960px;width:729px;background:#303030"></div>
<!-- scrollbar -->
<div class="a" style="left:730px;top:666px;width:10px;height:317px;background:#323232;border-radius:5px 5px 0 0"></div>
<div class="a" style="left:730px;top:666px;width:10px;height:14px;background:#1e1e1e;border:1px solid #2b2b2b;border-bottom:none;box-sizing:border-box;border-radius:5px 5px 0 0"></div>
<svg style="left:729px;top:675px" width="12" height="12"><circle cx="6" cy="6" r="3.900" fill="#232323" stroke="#a6a6a6" stroke-width="2"/></svg>
<svg style="left:729px;top:862px" width="12" height="12"><circle cx="6" cy="6" r="3.900" fill="#232323" stroke="#a6a6a6" stroke-width="2"/></svg>
<svg style="left:729px;top:879px" width="12" height="12"><circle cx="6" cy="6" r="3.900" fill="#232323" stroke="#a6a6a6" stroke-width="2"/></svg>
<!-- clip 1 video -->
<div class="a" style="left:45px;top:834px;width:209px;height:40px;background:#004b68"></div>
<div class="t" style="left:53.50px;top:835.81px;font-size:9.2px;letter-spacing:0.013px;color:#e4e4e4;">blue.mp4 [V]</div>
<div class="t" style="left:235.30px;top:835.02px;font-size:11.5px;letter-spacing:-0.122px;color:#3f7589;font-style:italic;">fx</div>
<!-- clip 1 audio -->
<div class="a" style="left:45px;top:879px;width:209px;height:40px;background:#004b68"></div>
<div class="a" style="left:46px;top:900px;width:208px;height:2px;background:#9fa9ad"></div>
<div class="a" style="left:45px;top:902px;width:209px;height:1px;background:#0d3042"></div>
<div class="a" style="left:45px;top:906px;width:209px;height:1px;background:#4db2f5"></div><div class="a" style="left:45px;top:907px;width:209px;height:1px;background:rgba(77,178,245,.35)"></div>
<div class="a" style="left:45px;top:918px;width:209px;height:1px;background:#4db2f5"></div><div class="a" style="left:45px;top:917px;width:209px;height:1px;background:rgba(77,178,245,.3)"></div>
<div class="t" style="left:235.30px;top:881.02px;font-size:11.5px;letter-spacing:-0.122px;color:#3f7589;font-style:italic;">fx</div>
<svg style="left:211px;top:882px" width="14" height="12"><g stroke="#ececec" stroke-width="1"><path d="M1.500 4.500 v3 M3.500 2 v8 M5.500 5 v2 M7.500 3.500 v5 M9.500 1 v10 M11.500 4.300 v3.400"/></g></svg>
<!-- clip 2 video (selected) -->
<div class="a" style="left:255px;top:834px;width:194px;height:40px;background:#005578;border:2px solid #cfcfcf;box-sizing:border-box"></div>
<div class="a" style="left:257px;top:850px;width:41px;height:22px;background:#3a7ad8;overflow:hidden">
<svg style="left:0;top:0" width="41" height="22"><path d="M26.500 12.500 L33 20" stroke="#0c0c0c" stroke-width="1"/><ellipse cx="27.500" cy="7.500" rx="4.600" ry="2" fill="#f2f2f0" transform="rotate(-58 27.500 7.500)"/><ellipse cx="22.200" cy="7.800" rx="2.300" ry="3" fill="#a4a4ac" transform="rotate(-20 22.200 7.800)"/><ellipse cx="22.500" cy="12.300" rx="4" ry="1.500" fill="#e8e4d0" transform="rotate(-12 22.500 12.300)"/><circle cx="25" cy="10.500" r="2" fill="#e6b82a"/><path d="M30 22 c2 -4 6 -5.500 11 -5 v5z" fill="#15360f"/><ellipse cx="39.500" cy="15" rx="1.400" ry="3" fill="#f4f4f0" transform="rotate(-15 39.500 15)"/></svg></div>
<div class="t" style="left:263.50px;top:835.81px;font-size:9.2px;letter-spacing:-0.004px;color:#e4e4e4;">blue.mp4 [V]</div>
<div class="t" style="left:430.40px;top:835.02px;font-size:11.5px;letter-spacing:-0.122px;color:#e4e4e4;font-style:italic;">fx</div>
<svg style="left:443px;top:833px" width="7" height="7"><path d="M1.500 1 H6 V5.500Z" fill="#d8d8d8"/><path d="M0.500 0.500 L6.500 6.500" stroke="#1e1e1e" stroke-width="1.100"/></svg>
<!-- clip 2 audio (selected) -->
<div class="a" style="left:255px;top:879px;width:194px;height:40px;background:#005578;border:2px solid #cfcfcf;box-sizing:border-box"></div>
<div class="a" style="left:256px;top:900px;width:192px;height:2px;background:#9fa9ad"></div>
<div class="a" style="left:257px;top:902px;width:190px;height:1px;background:#0d3042"></div>
<div class="a" style="left:257px;top:906px;width:190px;height:1px;background:#4db2f5"></div><div class="a" style="left:257px;top:907px;width:190px;height:1px;background:rgba(77,178,245,.35)"></div>
<div class="t" style="left:430.40px;top:881.02px;font-size:11.5px;letter-spacing:-0.122px;color:#3f7589;font-style:italic;">fx</div>
<svg style="left:406px;top:882px" width="14" height="12"><g stroke="#ececec" stroke-width="1"><path d="M1.500 4.500 v3 M3.500 2 v8 M5.500 5 v2 M7.500 3.500 v5 M9.500 1 v10 M11.500 4.300 v3.400"/></g></svg>
<svg style="left:443px;top:878px" width="7" height="7"><path d="M1.500 1 H6 V5.500Z" fill="#d8d8d8"/><path d="M0.500 0.500 L6.500 6.500" stroke="#1e1e1e" stroke-width="1.100"/></svg>
<svg style="left:262px;top:895px" width="11" height="11"><rect x=".5" y=".5" width="10" height="10" rx="1" fill="#b9b9b9" stroke="#1a1a1a"/><path d="M2.300 9.300 L9.300 2.300 V9.300Z" fill="#383838"/></svg>
<svg style="left:432px;top:895px" width="11" height="11"><rect x=".5" y=".5" width="10" height="10" rx="1" fill="#b9b9b9" stroke="#1a1a1a"/><path d="M1.700 1.700 L8.700 9.300 H1.700Z" fill="#383838"/></svg>
<!-- timeline playhead -->
<div class="a" style="left:274px;top:655px;width:1px;height:328px;background:#2d8ceb"></div>
<svg style="left:268px;top:651px" width="13" height="13"><path d="M1 0 H12 V7.500 L6.500 12 L1 7.500Z" fill="#2d8ceb"/><path d="M6.500 9 V12" stroke="#0c1c2c" stroke-width="1"/></svg>
<!-- mic icons -->
<svg style="left:-6px;top:884px" width="12" height="100"><rect x="3" y="0.7" width="5.400" height="9.300" rx="2.700" fill="#b0b0b0"/><path d="M9.800 5 v2.600 a4.100 4.600 0 0 1 -8.200 0 v-2.600" fill="none" stroke="#b0b0b0" stroke-width="1.300"/><path d="M2 13.8 h7" stroke="#b0b0b0" stroke-width="1.200"/><rect x="3" y="41.7" width="5.400" height="9.300" rx="2.700" fill="#b0b0b0"/><path d="M9.800 46 v2.600 a4.100 4.600 0 0 1 -8.200 0 v-2.600" fill="none" stroke="#b0b0b0" stroke-width="1.300"/><path d="M2 54.8 h7" stroke="#b0b0b0" stroke-width="1.200"/><rect x="3" y="82.7" width="5.400" height="9.300" rx="2.700" fill="#b0b0b0"/><path d="M9.800 87 v2.600 a4.100 4.600 0 0 1 -8.200 0 v-2.600" fill="none" stroke="#b0b0b0" stroke-width="1.300"/><path d="M2 95.8 h7" stroke="#b0b0b0" stroke-width="1.200"/></svg>
<!-- AUDIO METERS -->
<div class="a" style="left:769px;top:618px;width:23px;height:370px;background:#1d1d1d;border:1px solid #000;box-sizing:content-box"></div>
<div class="a" style="left:769px;top:627px;width:24px;height:1px;background:#000"></div>
<div class="a" style="left:781px;top:618px;width:1px;height:10px;background:#000"></div>
<!-- EFFECTS PANEL (top right) -->
<div class="a" style="left:815px;top:-5px;width:645px;height:81px;border:1px solid #343434;box-sizing:border-box"></div>
<div class="ln" style="left:816px;top:16px;width:639px;background:#2c2c2c"></div>
<div class="ln" style="left:816px;top:36px;width:639px;background:#2c2c2c"></div>
<div class="ln" style="left:816px;top:56px;width:639px;background:#2c2c2c"></div>
<div class="t" style="left:858.30px;top:0.13px;font-size:10.6px;letter-spacing:-0.013px;color:#a4a4a4;">Video Effects</div>
<div class="t" style="left:858.30px;top:20.13px;font-size:10.6px;letter-spacing:0.176px;color:#a4a4a4;">Video Transitions</div>
<div class="t" style="left:858.30px;top:40.13px;font-size:10.6px;letter-spacing:0.114px;color:#a4a4a4;">Custom Bin 01</div>
<svg style="left:818px;top:0" width="40" height="60">
<g fill="none" stroke="#a4a4a4" stroke-width="1.200"><path d="M2.600 3.200 l3.700 3.600 l-3.700 3.600 M2.600 23.200 l3.700 3.600 l-3.700 3.600 M2.600 43.200 l3.700 3.600 l-3.700 3.600"/></g>
<g fill="#aeaeae"><path d="M18 2.300 h14.200 v8.700 h-14.200z M18 0 h5.500 v1 h-5.500z M18 22.300 h14.200 v8.700 h-14.200z M18 20 h5.500 v1 h-5.500z M18 42.300 h14.200 v8.700 h-14.200z M18 40 h5.500 v1 h-5.500z"/></g>
</svg>
<svg style="left:1410px;top:78px" width="40" height="14">
<path d="M1 4 h13.200 v8 h-13.200z M1 2 h5.200 v1 h-5.200z" fill="#b2b2b2"/>
<g fill="none" stroke="#4a4a4a" stroke-width="1"><path d="M27.500 4.500 v8 h8 v-8 M26 3.600 h11 M29.500 3.500 a2 2 0 0 1 4 0 M29.500 6 v5 M31.500 6 v5 M33.500 6 v5"/></g>
</svg>
<div class="dk" style="left:806px;top:95px;width:649px;height:4px"></div>
<!-- LUMETRI PANEL -->
<div class="a" style="left:810px;top:99px;width:645px;height:1px;background:#2d8ceb"></div>
<div class="a" style="left:810px;top:99px;width:1px;height:884px;background:#2d8ceb"></div>
<div class="t" style="left:823.50px;top:106.33px;font-size:10.6px;letter-spacing:0.035px;color:#a4a4a4;">Essential Graphics</div>
<div class="t" style="left:956.10px;top:106.33px;font-size:10.6px;letter-spacing:0.329px;color:#e2e2e2;">Lumetri Color</div>
<div class="a" style="left:954px;top:123px;width:91px;height:2px;background:#d4d4d4"></div>
<svg style="left:1037px;top:109px" width="10" height="10"><path d="M0 1.600 h8 M0 4.700 h8 M0 7.800 h8" stroke="#d4d4d4" stroke-width="1.200"/></svg>
<div class="t" style="left:822.50px;top:134.33px;font-size:10.6px;letter-spacing:0.009px;color:#e2e2e2;">Edit</div>
<div class="a" style="left:822px;top:150px;width:21px;height:2px;background:#d4d4d4"></div>
<div class="t" style="left:864.20px;top:134.33px;font-size:10.6px;letter-spacing:0.113px;color:#a4a4a4;">Settings</div>
<div class="a" style="left:811px;top:157px;width:644px;height:4px;background:#1f1f1f"></div><div class="a" style="left:811px;top:161px;width:644px;height:1px;background:#2c2c2c"></div><div class="a" style="left:811px;top:162px;width:644px;height:25px;background:#1a1a1a"></div><div class="a" style="left:811px;top:162px;width:103px;height:25px;background:#222"></div><div class="a" style="left:811px;top:187px;width:644px;height:24px;background:#1e1e1e"></div>
<div class="t" style="left:820.00px;top:168.13px;font-size:10.6px;letter-spacing:0.082px;color:#a4a4a4;">Source · blue.mp4</div>
<svg style="left:917px;top:171px" width="10" height="7"><path d="M1 1.300 L4.600 4.800 L8.200 1.300" fill="none" stroke="#b0b0b0" stroke-width="1.200"/></svg>
<div class="t" style="left:936.50px;top:168.13px;font-size:10.6px;letter-spacing:0.163px;color:#2d8ceb;">blue · blue.mp4</div>
<div class="t" style="left:824.00px;top:188.50px;font-size:13.0px;letter-spacing:0.194px;color:#c4c4c4;font-style:italic;">fx</div>
<div class="a" style="left:847px;top:187px;width:300px;height:18px;border:1px solid #343434;border-radius:3px;background:#1c1c1c;box-sizing:border-box"></div>
<div class="t" style="left:855.60px;top:189.33px;font-size:10.6px;letter-spacing:0.276px;color:#e2e2e2;">Lumetri Color</div>
<svg style="left:1133px;top:193px" width="10" height="7"><path d="M0.700 1 L4.500 4.800 L8.300 1" fill="none" stroke="#b4b4b4" stroke-width="1.100"/></svg>
<svg style="left:1428px;top:188px" width="16" height="14" viewBox="1428 188 16 14"><path d="M1432.500 194.400 A4.400 4.400 0 1 1 1438.400 198.600" fill="none" stroke="#c6c6c6" stroke-width="1.600"/><path d="M1428.900 194.200 H1435.900 L1432.400 197.900Z" fill="#c6c6c6"/><path d="M1429.800 200.600 H1442.100" stroke="#c6c6c6" stroke-width="1.100"/></svg>
<div class="ln" style="left:811px;top:211px;width:644px"></div>
<svg style="left:822px;top:230px" width="8" height="10"><path d="M1.500 0.800 L5.300 4.500 L1.500 8.200" fill="none" stroke="#b0b0b0" stroke-width="1.200"/></svg>
<div class="t" style="left:836.20px;top:226.89px;font-size:11.0px;letter-spacing:-0.345px;color:#d0d0d0;font-weight:bold;">Basic Correction</div>
<div class="cb" style="left:1429px;top:224px"><svg width="14" height="14"><path d="M2.800 7.300 L6 10.500 L11 4.100" fill="none" stroke="#222" stroke-width="1.900"/></svg></div>
<svg style="left:822px;top:271px" width="8" height="10"><path d="M1.500 0.800 L5.300 4.500 L1.500 8.200" fill="none" stroke="#b0b0b0" stroke-width="1.200"/></svg>
<div class="t" style="left:836.20px;top:268.19px;font-size:11.0px;letter-spacing:-0.189px;color:#d0d0d0;font-weight:bold;">Creative</div>
<div class="cb" style="left:1429px;top:265px"><svg width="14" height="14"><path d="M2.800 7.300 L6 10.500 L11 4.100" fill="none" stroke="#222" stroke-width="1.900"/></svg></div>
<svg style="left:822px;top:312px" width="8" height="10"><path d="M1.500 0.800 L5.300 4.500 L1.500 8.200" fill="none" stroke="#b0b0b0" stroke-width="1.200"/></svg>
<div class="t" style="left:836.20px;top:308.99px;font-size:11.0px;letter-spacing:-0.416px;color:#d0d0d0;font-weight:bold;">Curves</div>
<div class="cb" style="left:1429px;top:306px"><svg width="14" height="14"><path d="M2.800 7.300 L6 10.500 L11 4.100" fill="none" stroke="#222" stroke-width="1.900"/></svg></div>
<svg style="left:823px;top:355px" width="10" height="8"><path d="M0.700 0.800 L4.500 4.500 L8.300 0.800" fill="none" stroke="#b0b0b0" stroke-width="1.200"/></svg>
<div class="t" style="left:836.20px;top:350.19px;font-size:11.0px;letter-spacing:-0.136px;color:#d0d0d0;font-weight:bold;">Color Wheels &amp; Match</div>
<div class="cb" style="left:1429px;top:347px"><svg width="14" height="14"><path d="M2.800 7.300 L6 10.500 L11 4.100" fill="none" stroke="#222" stroke-width="1.900"/></svg></div>
<svg style="left:822px;top:711px" width="8" height="10"><path d="M1.500 0.800 L5.300 4.500 L1.500 8.200" fill="none" stroke="#b0b0b0" stroke-width="1.200"/></svg>
<div class="t" style="left:836.20px;top:708.09px;font-size:11.0px;letter-spacing:-0.361px;color:#d0d0d0;font-weight:bold;">HSL Secondary</div>
<div class="cb" style="left:1429px;top:705px"><svg width="14" height="14"><path d="M2.800 7.300 L6 10.500 L11 4.100" fill="none" stroke="#222" stroke-width="1.900"/></svg></div>
<svg style="left:822px;top:752px" width="8" height="10"><path d="M1.500 0.800 L5.300 4.500 L1.500 8.200" fill="none" stroke="#b0b0b0" stroke-width="1.200"/></svg>
<div class="t" style="left:836.20px;top:749.09px;font-size:11.0px;letter-spacing:-0.061px;color:#d0d0d0;font-weight:bold;">Vignette</div>
<div class="cb" style="left:1429px;top:746px"><svg width="14" height="14"><path d="M2.800 7.300 L6 10.500 L11 4.100" fill="none" stroke="#222" stroke-width="1.900"/></svg></div>
<div class="ln" style="left:811px;top:253px;width:644px"></div>
<div class="ln" style="left:811px;top:294px;width:644px"></div>
<div class="ln" style="left:811px;top:335px;width:644px"></div>
<div class="ln" style="left:811px;top:693px;width:644px"></div>
<div class="ln" style="left:811px;top:734px;width:644px"></div>

<!-- Color match -->
<div class="t" style="left:830.30px;top:382.23px;font-size:10.6px;letter-spacing:0.242px;color:#a4a4a4;">Color Match</div>
<div class="a" style="left:1337px;top:377px;width:102px;height:24px;border:1px solid #9a9a9a;border-radius:12px;box-sizing:border-box"></div>
<div class="t" style="left:1344.20px;top:382.33px;font-size:10.6px;letter-spacing:0.242px;color:#c8c8c8;">Comparison View</div>
<div class="cb" style="left:831px;top:413px"><svg width="14" height="14"><path d="M2.800 7.300 L6 10.500 L11 4.100" fill="none" stroke="#222" stroke-width="1.900"/></svg></div>
<div class="t" style="left:849.60px;top:413.13px;font-size:10.6px;letter-spacing:0.158px;color:#a4a4a4;">Face Detection</div>
<div class="a" style="left:1359px;top:408px;width:80px;height:24px;border-radius:12px;background:#2b2b2b"></div>
<div class="t" style="left:1368.00px;top:413.33px;font-size:10.6px;letter-spacing:0.334px;color:#4c4c4c;">Apply Match</div>
<!-- wheels -->
<div class="a" style="left:852.0px;top:486.0px;width:177.0px;height:177.0px;border-radius:50%;background:radial-gradient(circle closest-side,rgba(128,128,128,1) 0%,rgba(128,128,128,.55) 40%,rgba(128,128,128,0) 100%),conic-gradient(#ff0000 0deg,#ff00ff 60deg,#0000ff 120deg,#00ffff 180deg,#00ff00 240deg,#ffff00 300deg,#ff0000 360deg)"></div>
<div class="a" style="left:836px;top:486.0px;width:6px;height:178.0px;background:#000"></div>
<svg style="left:836px;top:506px" width="11" height="8"><path d="M0 0 H6.500 L10.500 4 L6.500 8 H0Z" fill="#2d8ceb"/></svg>
<svg style="left:895px;top:552px" width="12" height="12"><path d="M6 0.500 V11.500 M0.400 6 H11.600" stroke="#eae6d4" stroke-width="1.200"/></svg>
<div class="t" style="left:918.05px;top:666.33px;font-size:10.6px;letter-spacing:0.014px;color:#b8b8b8;">Shadows</div>
<div class="a" style="left:1061.0px;top:462.0px;width:177.0px;height:177.0px;border-radius:50%;background:radial-gradient(circle closest-side,rgba(128,128,128,1) 0%,rgba(128,128,128,.55) 40%,rgba(128,128,128,0) 100%),conic-gradient(#ff0000 0deg,#ff00ff 60deg,#0000ff 120deg,#00ffff 180deg,#00ff00 240deg,#ffff00 300deg,#ff0000 360deg)"></div>
<div class="a" style="left:1045px;top:462.0px;width:6px;height:178.0px;background:#000"></div>
<svg style="left:1045px;top:507.5px" width="11" height="8"><path d="M0 0 H6.500 L10.500 4 L6.500 8 H0Z" fill="#2d8ceb"/></svg>
<svg style="left:1113px;top:512px" width="12" height="12"><path d="M6 0.500 V11.500 M0.400 6 H11.600" stroke="#eae6d4" stroke-width="1.200"/></svg>
<div class="t" style="left:1126.05px;top:641.93px;font-size:10.6px;letter-spacing:0.337px;color:#b8b8b8;">Midtones</div>
<div class="a" style="left:1270.0px;top:486.0px;width:177.0px;height:177.0px;border-radius:50%;background:radial-gradient(circle closest-side,rgba(128,128,128,1) 0%,rgba(128,128,128,.55) 40%,rgba(128,128,128,0) 100%),conic-gradient(#ff0000 0deg,#ff00ff 60deg,#0000ff 120deg,#00ffff 180deg,#00ff00 240deg,#ffff00 300deg,#ff0000 360deg)"></div>
<div class="a" style="left:1254px;top:486.0px;width:6px;height:178.0px;background:#000"></div>
<svg style="left:1254px;top:527px" width="11" height="8"><path d="M0 0 H6.500 L10.500 4 L6.500 8 H0Z" fill="#2d8ceb"/></svg>
<svg style="left:1321px;top:532.5px" width="12" height="12"><path d="M6 0.500 V11.500 M0.400 6 H11.600" stroke="#eae6d4" stroke-width="1.200"/></svg>
<div class="t" style="left:1332.15px;top:666.33px;font-size:10.6px;letter-spacing:0.316px;color:#b8b8b8;">Highlights</div>

</body></html>
